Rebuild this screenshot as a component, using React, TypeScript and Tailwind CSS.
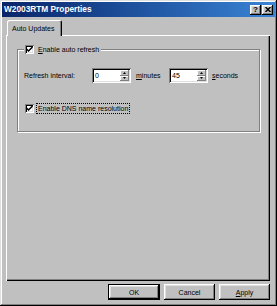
import React from 'react';

const raised =
  'shadow-[inset_-1px_-1px_#000,inset_1px_1px_#fff,inset_-2px_-2px_#808080,inset_2px_2px_#dfdfdf]';
const raisedThin = 'shadow-[inset_-1px_-1px_#808080,inset_1px_1px_#fff]';
const sunken =
  'shadow-[inset_1px_1px_#808080,inset_-1px_-1px_#fff,inset_2px_2px_#000,inset_-2px_-2px_#dfdfdf]';

const Check = ({ checked }: { checked: boolean }) => (
  <div className={`w-[9px] h-[9px] bg-white shrink-0 flex items-center justify-center ${sunken}`}>
    {checked && (
      <svg width="7" height="7" viewBox="0 0 7 7">
        <path d="M0.5 3 L2.5 5 L6.5 1" stroke="#000" strokeWidth="1.5" fill="none" />
      </svg>
    )}
  </div>
);

const Spin = ({ value }: { value: string }) => (
  <div className={`w-[39px] h-[15px] bg-white flex p-[2px] ${sunken}`}>
    <div className="flex-1 pl-[1px] leading-[11px] text-black">{value}</div>
    <div className="w-[9px] flex flex-col">
      <div className={`flex-1 bg-[#c0c0c0] flex items-center justify-center ${raisedThin}`}>
        <svg width="3" height="2" viewBox="0 0 3 2">
          <path d="M0 2 L1.5 0 L3 2 Z" fill="#000" />
        </svg>
      </div>
      <div className={`flex-1 bg-[#c0c0c0] flex items-center justify-center ${raisedThin}`}>
        <svg width="3" height="2" viewBox="0 0 3 2">
          <path d="M0 0 L1.5 2 L3 0 Z" fill="#000" />
        </svg>
      </div>
    </div>
  </div>
);

const Button = ({ children, primary, w }: { children: React.ReactNode; primary?: boolean; w: string }) => (
  <div className={`${w} h-[16px] ${primary ? 'border border-black' : ''}`}>
    <div className={`w-full h-full bg-[#c0c0c0] flex items-center justify-center ${raised}`}>{children}</div>
  </div>
);

const App = () => {
  return (
    <div
      className={`w-[277px] h-[306px] bg-[#c0c0c0] p-[2px] flex flex-col text-[7px] leading-[9px] text-black font-['Liberation_Sans',Arial,sans-serif] shadow-[inset_-1px_-1px_#000,inset_1px_1px_#dfdfdf,inset_-2px_-2px_#808080,inset_2px_2px_#fff]`}
    >
      {/* title bar */}
      <div className="h-[15px] flex items-center pl-[2px] pr-[2px] bg-linear-to-r from-[#0a246a] to-[#3a84d6]">
        <span className="text-white font-bold text-[8.3px]">W2003RTM Properties</span>
        <div className="ml-auto flex gap-[1px]">
          <div className={`w-[11px] h-[10px] bg-[#c0c0c0] flex items-center justify-center font-bold text-[8px] leading-[8px] ${raised}`}>
            ?
          </div>
          <div className={`w-[11px] h-[10px] bg-[#c0c0c0] flex items-center justify-center ${raised}`}>
            <svg width="6" height="5" viewBox="0 0 6 5">
              <path d="M0.5 0 L5.5 5 M5.5 0 L0.5 5" stroke="#000" strokeWidth="1.4" />
            </svg>
          </div>
        </div>
      </div>

      <div className="flex-1 flex flex-col pl-[4px] pr-[5px] pt-[2px] pb-[4px]">
        {/* tabs */}
        <div className="h-[16px] flex items-end">
          <div className="ml-[1px] w-[55px] h-[16px] -mb-[1px] relative z-10 bg-[#c0c0c0] rounded-t-[2px] shadow-[inset_1px_1px_#fff,inset_-1px_0_#000,inset_-2px_0_#808080] flex items-center pl-[5px]">
            Auto Updates
          </div>
        </div>

        {/* panel */}
        <div className="flex-1 pt-[9px] pl-[11px] pr-[10px] shadow-[inset_1px_1px_#fff,inset_-1px_-1px_#000,inset_-2px_-2px_#808080]">
          <fieldset className="border border-[#808080] shadow-[1px_1px_0_#fff,inset_1px_1px_0_#fff] pl-[6px] pb-[17px]">
            <legend className="bg-[#c0c0c0] pl-[1px] pr-[2px] h-[10px] flex items-center gap-[4px]">
              <Check checked />
              <span>
                <span className="underline">E</span>nable auto refresh
              </span>
            </legend>

            <div className="mt-[14px] h-[15px] flex items-center">
              <span className="w-[68px]">Refresh interval:</span>
              <Spin value="0" />
              <span className="ml-[5px] w-[33px]">
                <span className="underline">m</span>inutes
              </span>
              <Spin value="45" />
              <span className="ml-[4px]">
                <span className="underline">s</span>econds
              </span>
            </div>

            <div className="mt-[20px] h-[11px] flex items-center">
              <div className="ml-[1px]">
                <Check checked />
              </div>
              <span className="ml-[2px] px-[1px] border border-dotted border-black leading-[9px]">
                Enable DNS name resolution
              </span>
            </div>
          </fieldset>
        </div>

        {/* buttons */}
        <div className="mt-[3px] flex justify-end gap-[4px]">
          <Button primary w="w-[52px]">OK</Button>
          <Button w="w-[51px]">Cancel</Button>
          <Button w="w-[51px]">
            <span>
              <span className="underline">A</span>pply
            </span>
          </Button>
        </div>
      </div>
    </div>
  );
};

export default App;
